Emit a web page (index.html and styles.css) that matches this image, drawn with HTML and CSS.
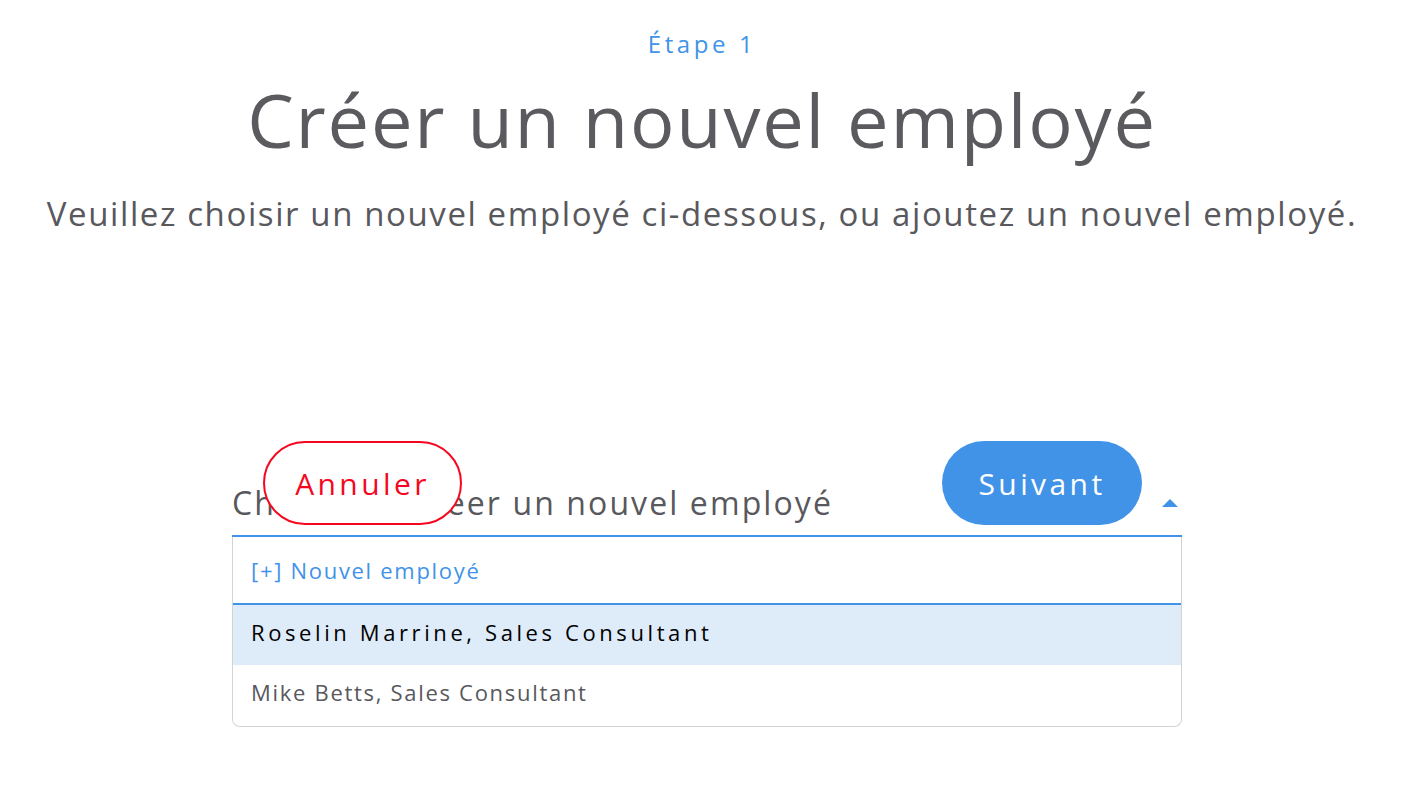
FILE: index.html
```html
<!DOCTYPE html>
<html lang="fr">
<head>
<meta charset="utf-8">
<title>Créer un nouvel employé</title>
<link rel="stylesheet" href="styles.css">
</head>
<body>
<header class="intro">
  <div class="step">Étape 1</div>
  <h1 class="title">Créer un nouvel employé</h1>
  <p class="lead">Veuillez choisir un nouvel employé ci-dessous, ou ajoutez un nouvel employé.</p>
</header>
<main class="form">
  <div class="select">
    <div class="select-field">
      <span class="placeholder">Choisir ou créer un nouvel employé</span>
      <span class="caret"></span>
    </div>
    <ul class="options">
      <li class="option option-new">[+] Nouvel employé</li>
      <li class="option option-active">Roselin Marrine, Sales Consultant</li>
      <li class="option option-last">Mike Betts, Sales Consultant</li>
    </ul>
    <button class="btn btn-cancel">Annuler</button>
    <button class="btn btn-next">Suivant</button>
  </div>
</main>
</body>
</html>
```
FILE: styles.css
```css
* { box-sizing: border-box; }
body {
  margin: 0;
  background: #fff;
  font-family: "Open Sans", "Noto Sans", sans-serif;
  color: #58585d;
}
.intro {
  text-align: center;
  padding: 26px 22px 0 0;
}
.step {
  color: #4193e8;
  font-size: 24px;
  letter-spacing: 3.6px;
  line-height: 36px;
}
.title {
  margin: 13px 0 0;
  font-weight: 400;
  font-size: 74px;
  line-height: 90px;
  letter-spacing: 1.8px;
  color: #5a5a5f;
}
.lead {
  margin: 27px 0 0;
  font-size: 33px;
  line-height: 44px;
  letter-spacing: 1.6px;
}
.form {
  margin: 245px 0 0 232px;
  width: 950px;
}
.select { position: relative; }
.select-field {
  display: flex;
  align-items: center;
  justify-content: space-between;
  height: 56px;
  padding-bottom: 10px;
  border-bottom: 2px solid #4193e8;
}
.placeholder {
  font-size: 32px;
  letter-spacing: 2.1px;
  color: #58585d;
  line-height: 40px;
}
.caret {
  width: 0;
  height: 0;
  border-left: 8px solid transparent;
  border-right: 8px solid transparent;
  border-bottom: 8px solid #4193e8;
  margin: 0 4px 0 0;
}
.options {
  list-style: none;
  margin: 0;
  padding: 0;
  border: 1.5px solid #d3d3d3;
  border-top: 0;
  border-radius: 0 0 8px 8px;
  overflow: hidden;
}
.option {
  height: 60px;
  display: flex;
  align-items: center;
  padding-left: 18px;
  font-size: 22px;
  letter-spacing: 1.7px;
  color: #58585d;
}
.option-new {
  height: 68px;
  color: #4193e8;
  border-bottom: 2px solid #4193e8;
}
.option-active {
  padding-bottom: 7px;
  background: #deebf8;
  color: #000;
  font-weight: 500;
  letter-spacing: 3.6px;
}
.option-last {
  height: 61px;
  padding-bottom: 8px;
}
.btn {
  position: absolute;
  top: -40px;
  height: 84px;
  width: 199px;
  border-radius: 42px;
  font-family: inherit;
  font-size: 30px;
  letter-spacing: 3.4px;
  cursor: pointer;
}
.btn-cancel {
  left: 31px;
  background: #fff;
  border: 2px solid #f5081f;
  color: #f5081f;
}
.btn-next {
  left: 710px;
  width: 200px;
  background: #4193e8;
  border: 0;
  color: #fff;
}
```
